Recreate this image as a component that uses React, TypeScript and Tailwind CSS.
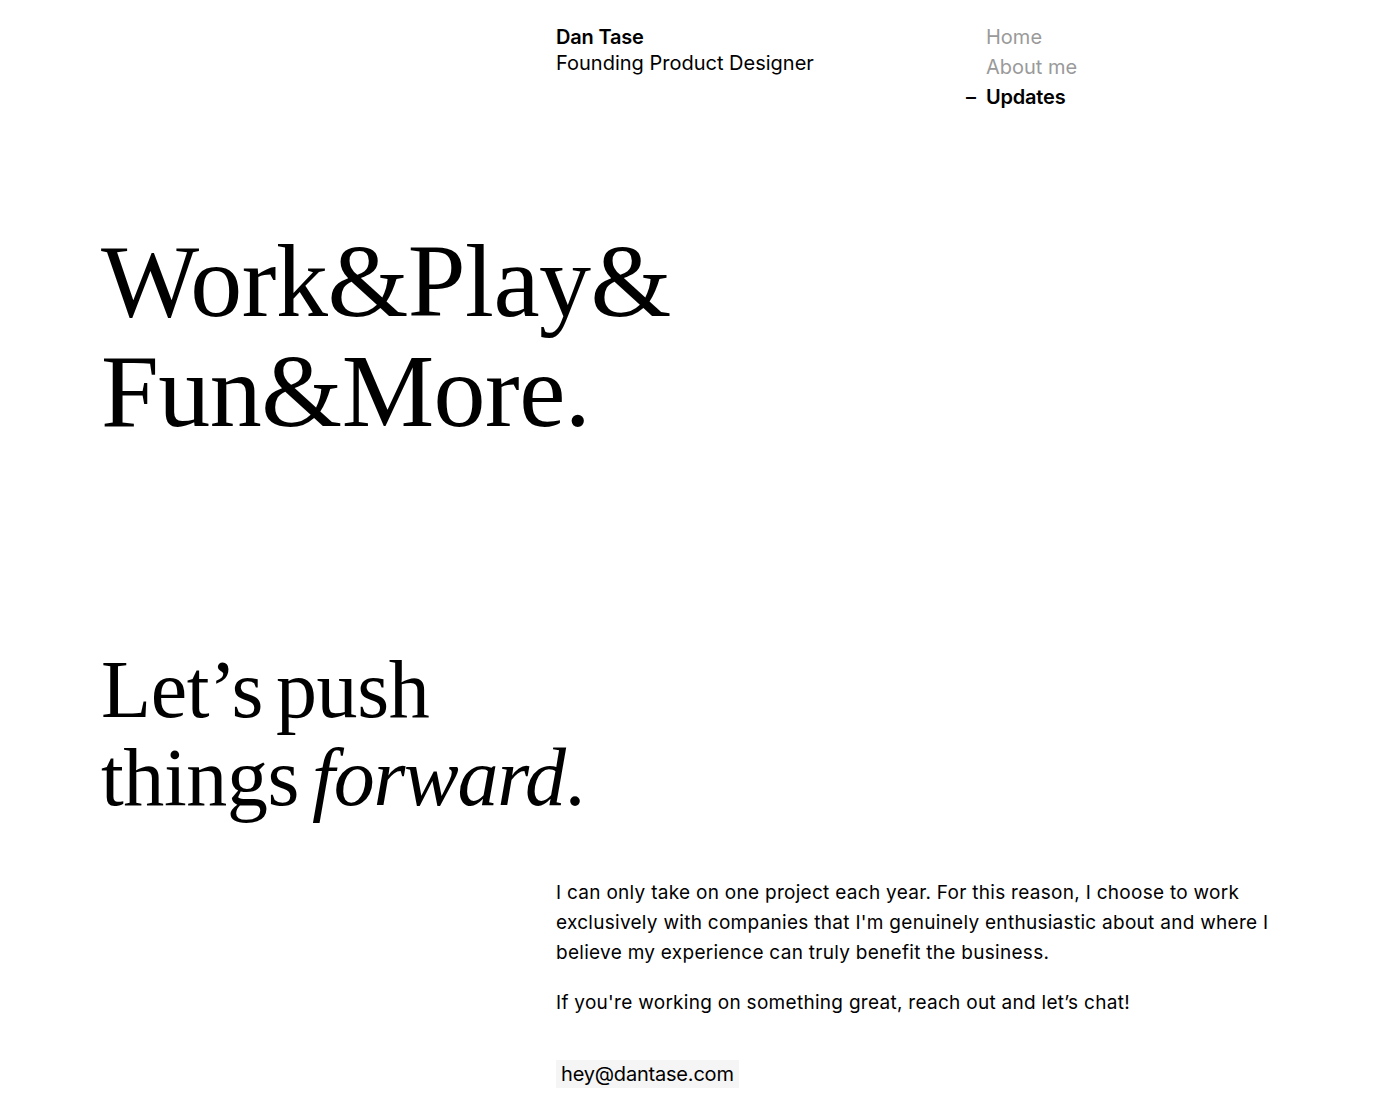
import React from 'react';

const navItems = [
  { label: 'Home', active: false },
  { label: 'About me', active: false },
  { label: 'Updates', active: true },
];

export default function App() {
  return (
    <div className="min-h-screen bg-white text-black font-[Inter,'Liberation_Sans',sans-serif]">
      <header className="flex pl-[556px]">
        <div className="w-[410px] pt-[24px] text-[20px] leading-[26px]">
          <p className="font-semibold tracking-[-0.01em]">Dan Tase</p>
          <p>Founding Product Designer</p>
        </div>
        <nav className="pt-[22px] text-[20px] leading-[30px]">
          {navItems.map((item) => (
            <div key={item.label} className="flex">
              <span className="w-[20px] font-semibold">{item.active ? '–' : ''}</span>
              <a
                href="#"
                className={item.active ? 'font-semibold tracking-[-0.01em] text-black' : 'text-[#9a9a9a]'}
              >
                {item.label}
              </a>
            </div>
          ))}
        </nav>
      </header>

      <main className="pl-[101px]">
        <h1 className="mt-[114px] font-['Liberation_Serif',serif] text-[104px] leading-[110px] tracking-[-0.005em]">
          Work&amp;Play&amp;
          <br />
          Fun&amp;More.
        </h1>

        <h2 className="mt-[200px] font-['Liberation_Serif',serif] text-[82px] leading-[88px] tracking-[-0.005em] [word-spacing:-7px]">
          Let’s push
          <br />
          things <em className="italic tracking-[-0.015em]">forward</em>.
        </h2>

        <section className="mt-[56px] ml-[455px] w-[735px] text-[19px] leading-[30px] tracking-[0.015em]">
          <p>
            I can only take on one project each year. For this reason, I choose to work
            exclusively with companies that I'm genuinely enthusiastic about and where I
            believe my experience can truly benefit the business.
          </p>
          <p className="mt-[20px]">If you're working on something great, reach out and let’s chat!</p>
          <a
            href="mailto:hey@dantase.com"
            className="mt-[42px] inline-block bg-[#f5f5f5] px-[5px] text-[20px] leading-[28px] tracking-[-0.01em]"
          >
            hey@dantase.com
          </a>
        </section>
      </main>
    </div>
  );
}
